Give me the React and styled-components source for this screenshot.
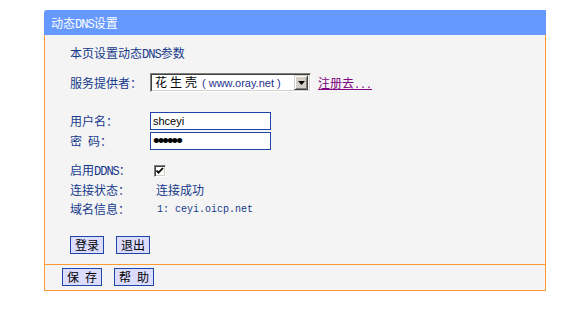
import styled, { createGlobalStyle } from 'styled-components'

const GlobalStyle = createGlobalStyle`
    body {
        margin:0;
        background:#fff;
        font-family:'Noto Sans CJK SC',sans-serif;
        font-size:12px;
    }
`

const Panel = styled.section`
    width:502px;
    margin:10px 0 0 44px;
    color:#163a8c;
`

const Header = styled.div`
    height:25px;
    line-height:25px;
    padding-left:7px;
    background:#6699ff;
    color:#fff;
    border-top-left-radius:3px;
`

const Body = styled.div`
    display:flex;
    flex-direction:column;
    padding:10px 0 10px 25px;
    background:#f4f4f4;
    border-left:1px solid #ff9933;
    border-right:1px solid #ff9933;
`

const Intro = styled.div`
    height:16px;
    line-height:16px;
`

const Row = styled.div`
    display:flex;
    align-items:center;
    height:${p => p.$h || 19}px;
    margin-top:${p => p.$gap || 0}px;
`

const Label = styled.div`
    width:80px;
    flex-shrink:0;
    line-height:16px;
`

const Value = styled.div`
    padding-left:${p => p.$pad || 0}px;
    line-height:16px;
`

const Ascii = styled.span`
    font-family:'Liberation Mono',monospace;
    font-size:${p => p.$size || 10}px;
    letter-spacing:${p => p.$size > 10 ? -1 : 0}px;
`

const Select = styled.div`
    display:flex;
    align-items:center;
    box-sizing:border-box;
    width:161px;
    height:19px;
    background:#fff;
    border-top:1px solid #808080;
    border-left:1px solid #808080;
    border-bottom:1px solid #fff;
    border-right:1px solid #fff;
    box-shadow:inset 1px 1px 0 #404040, inset -1px -1px 0 #d4d0c8;
    padding:0 1px 0 4px;
    color:#000;
`

const SelectText = styled.span`
    flex:1;
    white-space:nowrap;
    line-height:15px;
`

const Spaced = styled.span`
    display:inline-block;
    letter-spacing:3px;
    margin-right:2px;
`

const Site = styled.span`
    font-family:'Liberation Sans',sans-serif;
    font-size:11px;
    color:#1c2f8a;
`

const DropButton = styled.span`
    display:flex;
    align-items:center;
    justify-content:center;
    box-sizing:border-box;
    width:14px;
    height:15px;
    margin-right:1px;
    background:#d4d0c8;
    border-top:1px solid #d4d0c8;
    border-left:1px solid #d4d0c8;
    border-right:1px solid #404040;
    border-bottom:1px solid #404040;
    box-shadow:inset 1px 1px 0 #fff, inset -1px -1px 0 #808080;
`

const Link = styled.a`
    margin:4px 0 0 7px;
    color:#800080;
    text-decoration:underline;
    line-height:16px;
    cursor:pointer;
`

const TextInput = styled.input`
    box-sizing:border-box;
    width:121px;
    height:18px;
    margin:0;
    padding:0 2px;
    border:1px solid #1f45a8;
    background:#fff;
    color:#000;
    font-family:'Liberation Sans',sans-serif;
    font-size:${p => p.type === 'password' ? 19 : 11}px;
    letter-spacing:${p => p.type === 'password' ? -2 : 0}px;
    outline:none;
`

const Check = styled.span`
    display:flex;
    box-sizing:border-box;
    width:12px;
    height:12px;
    margin-left:4px;
    background:#fff;
    border-top:1px solid #808080;
    border-left:1px solid #808080;
    border-bottom:1px solid #fff;
    border-right:1px solid #fff;
    box-shadow:inset 1px 1px 0 #404040, inset -1px -1px 0 #d4d0c8;
`

const Buttons = styled.div`
    display:flex;
    gap:12px;
    margin-top:${p => p.$gap || 0}px;
`

const Button = styled.button`
    box-sizing:border-box;
    height:18px;
    margin:0;
    padding:0 ${p => p.$pad || 4}px;
    background:#dcdcff;
    border:1px solid #1f45a8;
    color:#000;
    font-family:'Noto Sans CJK SC',sans-serif;
    font-size:12px;
    line-height:16px;
`

const Footer = styled.div`
    display:flex;
    gap:12px;
    height:27px;
    padding:3px 0 0 17px;
    box-sizing:border-box;
    background:#f4f4f4;
    border:1px solid #ff9933;
`

export default function App() {
    return (
        <>
            <GlobalStyle />
            <Panel>
                <Header>动态<Ascii $size={12}>DNS</Ascii>设置</Header>
                <Body>
                    <Intro>本页设置动态<Ascii $size={12}>DNS</Ascii>参数</Intro>

                    <Row $gap={12}>
                        <Label>服务提供者：</Label>
                        <Select>
                            <SelectText><Spaced>花生壳</Spaced><Site>( www.oray.net )</Site></SelectText>
                            <DropButton>
                                <svg width="7" height="4" viewBox="0 0 7 4">
                                    <path d="M0 0h7L3.5 4z" fill="#000" />
                                </svg>
                            </DropButton>
                        </Select>
                        <Link>注册去<Ascii>...</Ascii></Link>
                    </Row>

                    <Row $gap={20} $h={18}>
                        <Label>用户名：</Label>
                        <TextInput defaultValue="shceyi" />
                    </Row>
                    <Row $gap={2} $h={18}>
                        <Label>密{'\u2002'}码：</Label>
                        <TextInput type="password" defaultValue="123456" />
                    </Row>

                    <Row $gap={11}>
                        <Label>启用<Ascii $size={12}>DDNS</Ascii>：</Label>
                        <Check>
                            <svg width="10" height="10" viewBox="0 0 10 10">
                                <path d="M1.5 4.5l2 2.2L8 2" stroke="#000" strokeWidth="1.8" fill="none" />
                            </svg>
                        </Check>
                    </Row>
                    <Row>
                        <Label>连接状态：</Label>
                        <Value $pad={6}>连接成功</Value>
                    </Row>
                    <Row>
                        <Label>域名信息：</Label>
                        <Value $pad={7}><Ascii>1: ceyi.oicp.net</Ascii></Value>
                    </Row>

                    <Buttons $gap={18}>
                        <Button>登录</Button>
                        <Button>退出</Button>
                    </Buttons>
                </Body>
                <Footer>
                    <Button>保{'\u2002'}存</Button>
                    <Button>帮{'\u2002'}助</Button>
                </Footer>
            </Panel>
        </>
    )
}
